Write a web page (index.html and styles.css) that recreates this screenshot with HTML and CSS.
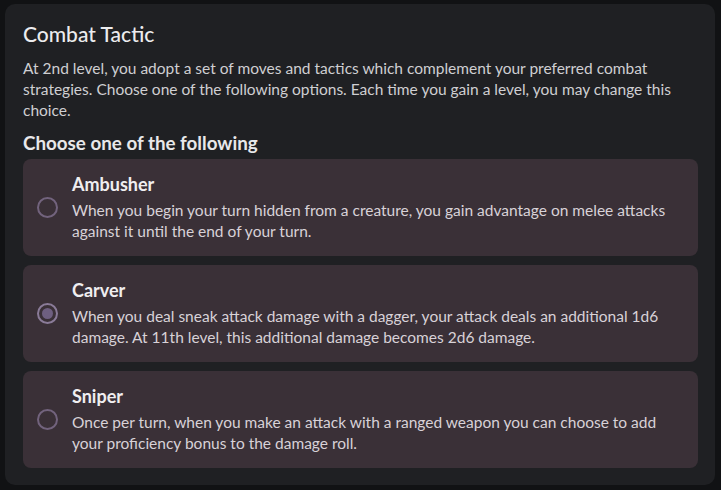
FILE: index.html
```html
<html>
<head>
    <title>Combat Tactic</title>
    <meta charset="UTF-8">
    <link rel="stylesheet" href="styles.css">
</head>
<body>

<div class="panel">
    <h2 class="title">Combat Tactic</h2>
    <p class="intro">At 2nd level, you adopt a set of moves and tactics which complement your preferred combat
        strategies. Choose one of the following options. Each time you gain a level, you may change this
        choice.</p>
    <h3 class="choose">Choose one of the following</h3>

    <div class="options">
        <label class="option">
            <span class="radio"></span>
            <span class="text">
                <b>Ambusher</b>
                <span class="desc">When you begin your turn hidden from a creature, you gain advantage on melee attacks against it until the end of your turn.</span>
            </span>
        </label>
        <label class="option">
            <span class="radio checked"></span>
            <span class="text">
                <b>Carver</b>
                <span class="desc">When you deal sneak attack damage with a dagger, your attack deals an additional 1d6 damage. At 11th level, this additional damage becomes 2d6 damage.</span>
            </span>
        </label>
        <label class="option">
            <span class="radio"></span>
            <span class="text">
                <b>Sniper</b>
                <span class="desc">Once per turn, when you make an attack with a ranged weapon you can choose to add your proficiency bonus to the damage roll.</span>
            </span>
        </label>
    </div>
</div>

</body>
</html>
```

FILE: styles.css
```css
body {
    margin: 0;
    padding: 4px 6px 6px 5px;
    background: #111214;
    font-family: Lato, "Noto Sans", sans-serif;
    color: #e6e6e8;
}
.panel {
    background: #1f2023;
    border-radius: 10px;
    padding: 18px 17px 17px 18px;
}
.title {
    margin: 0 0 12px;
    font-size: 21px;
    font-weight: 500;
    line-height: 24px;
    color: #ececee;
}
.intro {
    margin: 0;
    font-size: 15.5px;
    line-height: 21px;
    color: #cfcfd2;
}
.choose {
    margin: 10px 0 4px;
    font-size: 18.8px;
    font-weight: 700;
    line-height: 24px;
    color: #e8e8ea;
}
.options {
    display: flex;
    flex-direction: column;
    gap: 9px;
}
.option {
    display: flex;
    align-items: center;
    gap: 14px;
    background: #3a3037;
    border-radius: 8px;
    padding: 14px 16px 14px 14px;
}
.radio {
    flex: none;
    width: 17px;
    height: 17px;
    border: 2px solid #72637d;
    border-radius: 50%;
    display: flex;
    align-items: center;
    justify-content: center;
}
.radio.checked {
    border-color: #8a7b98;
}
.radio.checked::after {
    content: "";
    width: 11px;
    height: 11px;
    border-radius: 50%;
    background: #6e5f80;
}
.text b {
    display: block;
    font-size: 18px;
    line-height: 22px;
    color: #f0eef0;
    margin-bottom: 5px;
}
.desc {
    display: block;
    font-size: 15.5px;
    line-height: 21px;
    color: #d8d2d7;
}
```
